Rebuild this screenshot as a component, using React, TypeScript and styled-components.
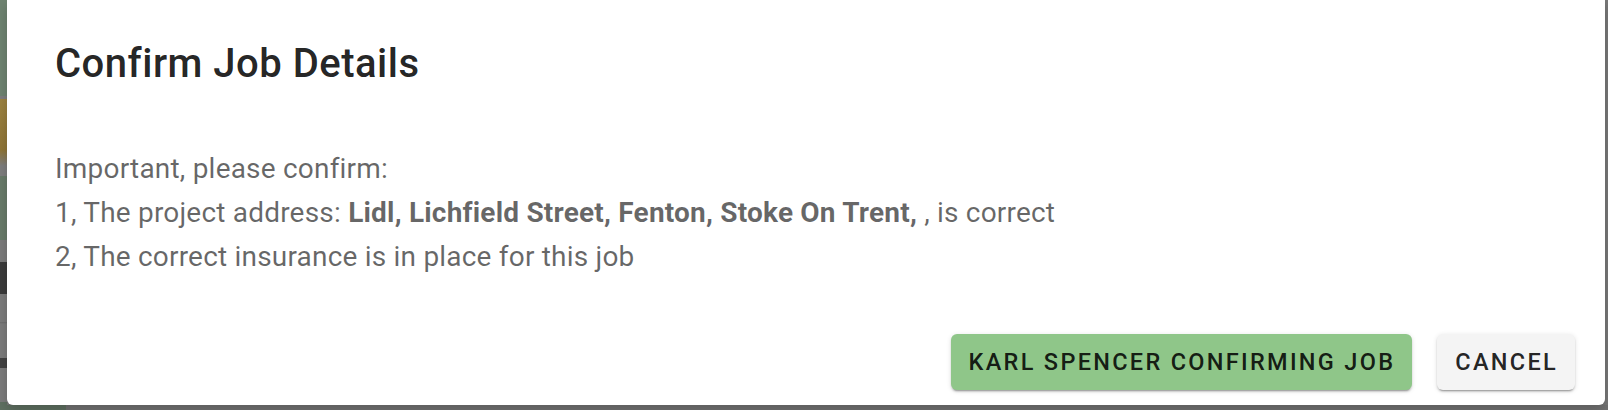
import React from "react";
import styled, { createGlobalStyle } from "styled-components";

const Global = createGlobalStyle`
  html, body { margin: 0; padding: 0; }
  body {
    width: 1608px;
    height: 410px;
    overflow: hidden;
    background: #767676;
    font-family: Roboto, "Noto Sans", Arial, sans-serif;
  }
`;

const Stage = styled.div`
  position: relative;
  width: 1608px;
  height: 410px;
  display: grid;
  grid-template-columns: 7px 1fr 3px;
  grid-template-rows: 405px 5px;
  background: #777777;
`;

const LeftStrip = styled.div`
  grid-row: 1 / 3;
  background: linear-gradient(
    to bottom,
    #6e8370 0px,
    #6e8370 96px,
    #7d7d7d 96px,
    #7d7d7d 99px,
    #9c8240 99px,
    #8e7436 150px,
    #7d7d7d 166px,
    #7d7d7d 176px,
    #687a69 176px,
    #687a69 240px,
    #7b7b7b 240px,
    #7b7b7b 262px,
    #3b3b3b 262px,
    #3b3b3b 294px,
    #7b7b7b 294px,
    #7b7b7b 322px,
    #6c6c6c 322px,
    #7b7b7b 324px,
    #7b7b7b 358px,
    #424242 358px,
    #424242 368px,
    #7b7b7b 368px,
    #7b7b7b 402px,
    #5f7061 402px
  );
`;

const BottomStrip = styled.div`
  grid-column: 2 / 4;
  grid-row: 2;
  background: linear-gradient(
    to right,
    #5f7061 0px,
    #5f7061 59px,
    #727272 59px
  );
`;

const Dialog = styled.div`
  grid-column: 2;
  grid-row: 1;
  background: #ffffff;
  border-radius: 0 0 6px 6px;
  box-shadow: 0 6px 12px rgba(0, 0, 0, 0.18);
  display: flex;
  flex-direction: column;
  position: relative;
  z-index: 1;
`;

const Title = styled.h2`
  margin: 0;
  padding: 36px 48px 0 48px;
  font-family: Roboto, Arial, sans-serif;
  font-size: 40px;
  font-weight: 500;
  line-height: 56px;
  letter-spacing: 0.5px;
  color: rgba(0, 0, 0, 0.87);
`;

const Content = styled.div`
  padding: 55px 48px 0 48px;
  flex: 1;
`;

const Line = styled.p`
  margin: 0;
  font-family: Roboto, Arial, sans-serif;
  font-size: 28px;
  line-height: 44px;
  font-weight: 400;
  letter-spacing: 0.2px;
  color: rgba(0, 0, 0, 0.6);

  strong {
    font-weight: 700;
  }
`;

const Actions = styled.div`
  display: flex;
  justify-content: flex-end;
  align-items: center;
  gap: 25px;
  padding: 0 30px 15px 0;
`;

const Button = styled.button<{ $variant: "primary" | "secondary" }>`
  height: 56px;
  padding: 0 17px 0 18px;
  border: none;
  border-radius: 6px;
  font-family: Roboto, Arial, sans-serif;
  font-size: 23.5px;
  font-weight: 500;
  letter-spacing: 2.3px;
  text-transform: uppercase;
  color: rgba(0, 0, 0, 0.87);
  background: ${(p) => (p.$variant === "primary" ? "#8fc689" : "#f4f4f4")};
  box-shadow: 0 3px 1px -2px rgba(0, 0, 0, 0.2), 0 2px 2px 0 rgba(0, 0, 0, 0.14),
    0 1px 5px 0 rgba(0, 0, 0, 0.12);
  cursor: pointer;
`;

export default function App() {
  return (
    <>
      <Global />
      <Stage>
        <LeftStrip />
        <Dialog>
          <Title>Confirm Job Details</Title>
          <Content>
            <Line>Important, please confirm:</Line>
            <Line>
              1, The project address:{" "}
              <strong>Lidl, Lichfield Street, Fenton, Stoke On Trent,</strong> , is correct
            </Line>
            <Line>2, The correct insurance is in place for this job</Line>
          </Content>
          <Actions>
            <Button $variant="primary">Karl Spencer Confirming Job</Button>
            <Button $variant="secondary">Cancel</Button>
          </Actions>
        </Dialog>
        <div />
        <BottomStrip />
      </Stage>
    </>
  );
}
